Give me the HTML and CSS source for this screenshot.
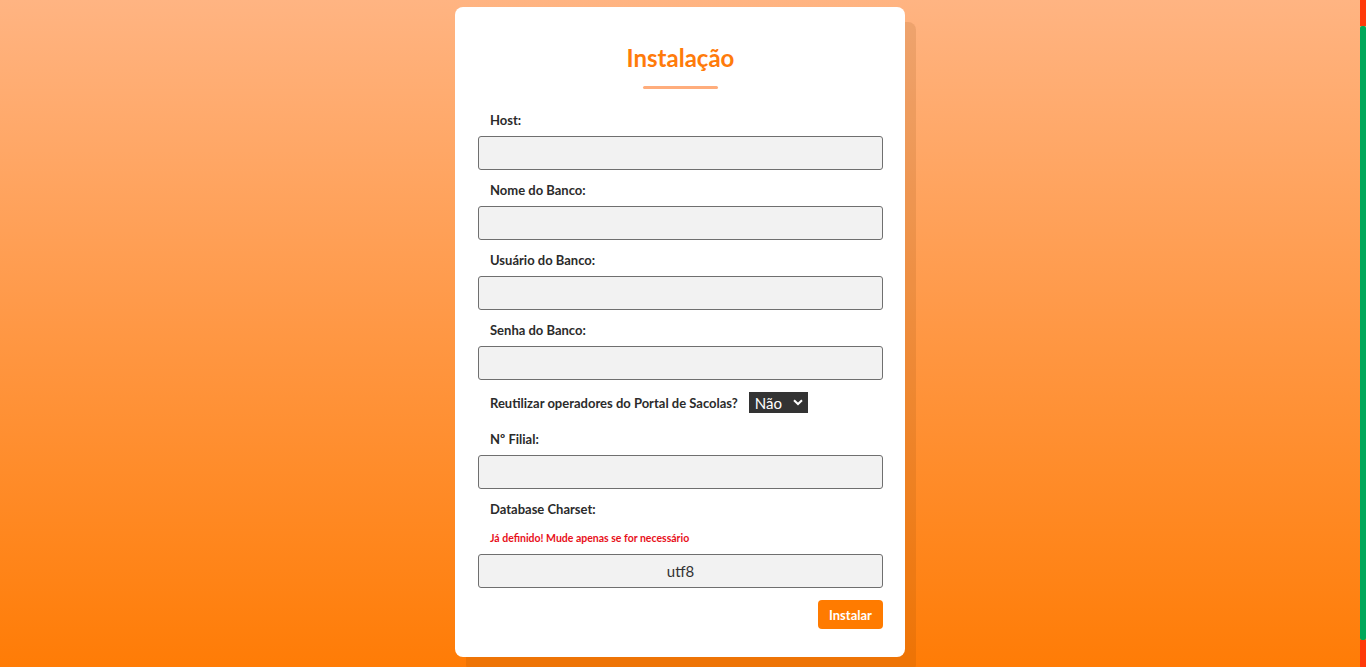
FILE: index.html
```html
<!DOCTYPE html>
<html lang="pt">
<head>
<meta charset="utf-8">
<title>Instalação</title>
<link rel="stylesheet" href="styles.css">
</head>
<body>
<main class="page">
  <section class="card">
    <h1 class="title">Instalação</h1>
    <div class="title-bar"></div>
    <form class="form">
      <label class="label">Host:</label>
      <input class="field" type="text">
      <label class="label">Nome do Banco:</label>
      <input class="field" type="text">
      <label class="label">Usuário do Banco:</label>
      <input class="field" type="text">
      <label class="label">Senha do Banco:</label>
      <input class="field" type="password">
      <div class="row">
        <label class="label label-inline">Reutilizar operadores do Portal de Sacolas?</label>
        <div class="select">
          <span>Não</span>
          <svg class="chev" width="10" height="7" viewBox="0 0 10 7"><path d="M1 1.2 L5 5 L9 1.2" fill="none" stroke="#fff" stroke-width="2"/></svg>
        </div>
      </div>
      <label class="label">Nº Filial:</label>
      <input class="field" type="text">
      <label class="label">Database Charset:</label>
      <p class="warn">Já definido! Mude apenas se for necessário</p>
      <input class="field field-center" type="text" value="utf8">
      <div class="actions">
        <button class="btn" type="button">Instalar</button>
      </div>
    </form>
  </section>
</main>
<div class="scroll-strip">
  <div class="strip-red top"></div>
  <div class="strip-green"></div>
  <div class="strip-red bottom"></div>
</div>
</body>
</html>
```
FILE: styles.css
```css
* { box-sizing: border-box; }
html, body { margin: 0; height: 100%; }
body {
  font-family: "Lato", "Noto Sans", sans-serif;
  background: linear-gradient(to bottom, #ffb482 0%, #ff9a4a 45%, #ff7c06 100%);
  overflow: hidden;
}
.page {
  display: flex;
  justify-content: center;
  padding-top: 7px;
  padding-right: 6px;
}
.card {
  width: 450px;
  height: 650px;
  background: #fff;
  border-radius: 8px;
  box-shadow: 11px 15px 0 rgba(120, 60, 0, 0.13);
  padding: 37px 22px 28px 23px;
  display: flex;
  flex-direction: column;
}
.title {
  margin: 0;
  text-align: center;
  color: #ff7b0a;
  font-size: 24px;
  line-height: 28px;
  font-weight: 700;
}
.title-bar {
  width: 75px;
  height: 4px;
  border-radius: 2px;
  background: #ffad7c;
  margin: 14px auto 0;
}
.form {
  display: flex;
  flex-direction: column;
  margin-top: 23px;
}
.label {
  display: block;
  font-size: 13px;
  line-height: 16px;
  font-weight: 700;
  color: #2b2b2b;
  padding-left: 12px;
  margin-bottom: 8px;
}
.field {
  width: 100%;
  height: 34px;
  background: #f2f2f2;
  border: 1px solid #6f6f6f;
  border-radius: 3px;
  margin: 0 0 12px;
  font-family: inherit;
  font-size: 15px;
  color: #333;
  padding: 0 10px;
}
.field-center { text-align: center; }
.row {
  display: flex;
  align-items: center;
  height: 21px;
  margin-bottom: 18px;
}
.label-inline { margin-bottom: 0; }
.select {
  margin-left: 11px;
  width: 59px;
  height: 21px;
  background: #333;
  color: #fff;
  font-size: 15px;
  display: flex;
  align-items: center;
  justify-content: space-between;
  padding: 0 5px 0 6px;
}
.warn {
  margin: 7px 0 10px;
  padding-left: 12px;
  color: #e8101a;
  font-size: 10.5px;
  line-height: 12px;
  font-weight: 700;
}
.actions {
  display: flex;
  justify-content: flex-end;
}
.btn {
  width: 65px;
  height: 29px;
  border: 0;
  border-radius: 4px;
  background: #ff7b00;
  color: #fff;
  font-family: inherit;
  font-weight: 700;
  font-size: 13px;
}
.scroll-strip {
  position: fixed;
  top: 0;
  right: 0;
  width: 6px;
  height: 100%;
  display: flex;
  flex-direction: column;
}
.strip-red { background: #ff3a0a; }
.strip-red.top { height: 26px; }
.strip-green { flex: 1; background: #00a85a; border-radius: 2px; }
.strip-red.bottom { height: 27px; }
```
